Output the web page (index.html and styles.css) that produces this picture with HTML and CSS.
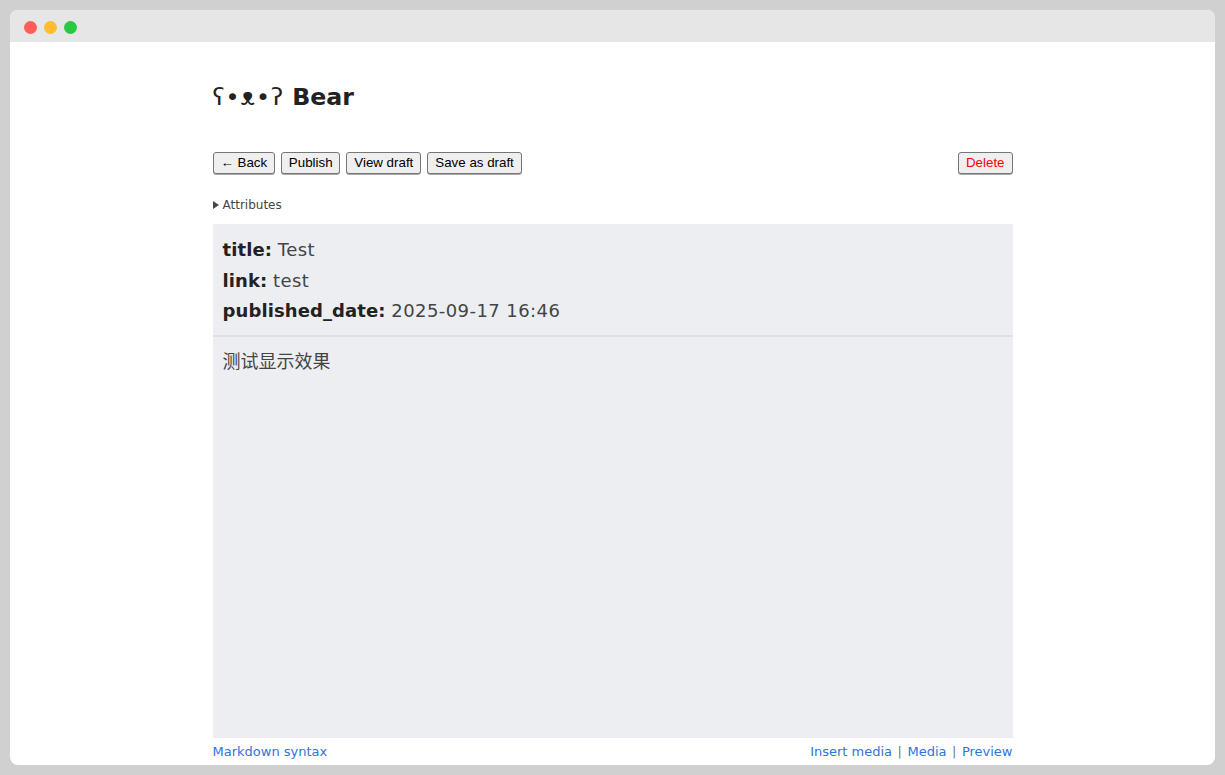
FILE: index.html
```html
<!DOCTYPE html>
<html lang="en">
<head>
<meta charset="utf-8">
<title>Bear</title>
<link rel="stylesheet" href="styles.css">
</head>
<body>
<div class="window">
  <div class="titlebar">
    <span class="dot dot-red"></span>
    <span class="dot dot-yellow"></span>
    <span class="dot dot-green"></span>
  </div>
  <main class="page">
    <h1 class="brand"><span class="kaomoji">ʕ•ᴥ•ʔ</span> Bear</h1>
    <div class="toolbar">
      <div class="toolbar-group">
        <button class="btn">← Back</button>
        <button class="btn">Publish</button>
        <button class="btn">View draft</button>
        <button class="btn">Save as draft</button>
      </div>
      <button class="btn btn-danger">Delete</button>
    </div>
    <div class="attributes"><span class="caret"></span>Attributes</div>
    <section class="editor">
      <div class="header-fields">
        <div class="field"><b>title:</b> <span class="value">Test</span></div>
        <div class="field"><b>link:</b> <span class="value">test</span></div>
        <div class="field"><b>published_date:</b> <span class="value">2025-09-17 16:46</span></div>
      </div>
      <div class="body-text">测试显示效果</div>
    </section>
    <footer class="links">
      <a href="#">Markdown syntax</a>
      <span class="links-right"><a href="#">Insert media</a><span class="sep">|</span><a href="#">Media</a><span class="sep">|</span><a href="#">Preview</a></span>
    </footer>
  </main>
</div>
</body>
</html>
```

FILE: styles.css
```css
* { box-sizing: border-box; }
html, body { height: 100%; }
body {
  margin: 0;
  padding: 10px;
  background: #d0d0d0;
  overflow: hidden;
  font-family: "DejaVu Sans", Verdana, sans-serif;
  color: #444;
}
.window {
  height: 755px;
  background: #fff;
  border-radius: 8px;
  overflow: hidden;
  display: flex;
  flex-direction: column;
}
.titlebar {
  height: 32px;
  flex: none;
  background: #e6e6e6;
  display: flex;
  align-items: center;
  gap: 7px;
  padding: 2px 0 0 13.5px;
}
.dot { width: 13px; height: 13px; border-radius: 50%; }
.dot-red { background: #ff5f57; }
.dot-yellow { background: #febc2e; }
.dot-green { background: #28c840; }
.page {
  width: 800px;
  margin: 0 auto;
  flex: 1;
  display: flex;
  flex-direction: column;
}
.brand {
  margin: 0;
  padding-top: 39px;
  height: 110px;
  font-size: 23.7px;
  line-height: 32px;
  font-weight: 700;
  color: #222;
}
.kaomoji { font-weight: 400; letter-spacing: 1px; }
.toolbar {
  display: flex;
  justify-content: space-between;
  align-items: flex-start;
}
.toolbar-group { display: flex; gap: 6px; }
.btn {
  height: 22px;
  padding: 0 7px;
  font-family: "Liberation Sans", Arial, sans-serif;
  font-size: 13.33px;
  line-height: 18px;
  color: #000;
  background: #efefef;
  border: 1px solid #767676;
  border-radius: 3px;
  box-shadow: 0 1px 0 #aaa;
}
.toolbar-group .btn:nth-child(2) { padding: 0 6.7px; }
.btn-danger { color: #f00; }
.attributes {
  margin-top: 23px;
  height: 27px;
  font-size: 12px;
  line-height: 16px;
  color: #444;
  display: flex;
  align-items: flex-start;
}
.caret {
  width: 0;
  height: 0;
  margin: 4px 4px 0 0;
  border-left: 6px solid #444;
  border-top: 4px solid transparent;
  border-bottom: 4px solid transparent;
}
.editor {
  height: 514px;
  background: #eceef2;
  font-size: 18px;
  color: #444;
}
.header-fields {
  height: 113px;
  padding: 11px 10px 0;
  border-bottom: 2px solid #dfe0e3;
}
.field { height: 30.5px; line-height: 30.5px; white-space: nowrap; }
.field b { color: #222; font-weight: 700; letter-spacing: 0.1px; }
.value { letter-spacing: 0.42px; }
.body-text {
  padding: 10px 10px 0;
  font-family: "Noto Sans CJK SC", "DejaVu Sans", sans-serif;
  font-size: 18px;
  line-height: 26px;
}
.links {
  display: flex;
  justify-content: space-between;
  padding-top: 6px;
  font-size: 13px;
  line-height: 16px;
  color: #777;
}
.links a { color: #3273dc; text-decoration: none; }
.sep { margin: 0 5.5px; }
```
